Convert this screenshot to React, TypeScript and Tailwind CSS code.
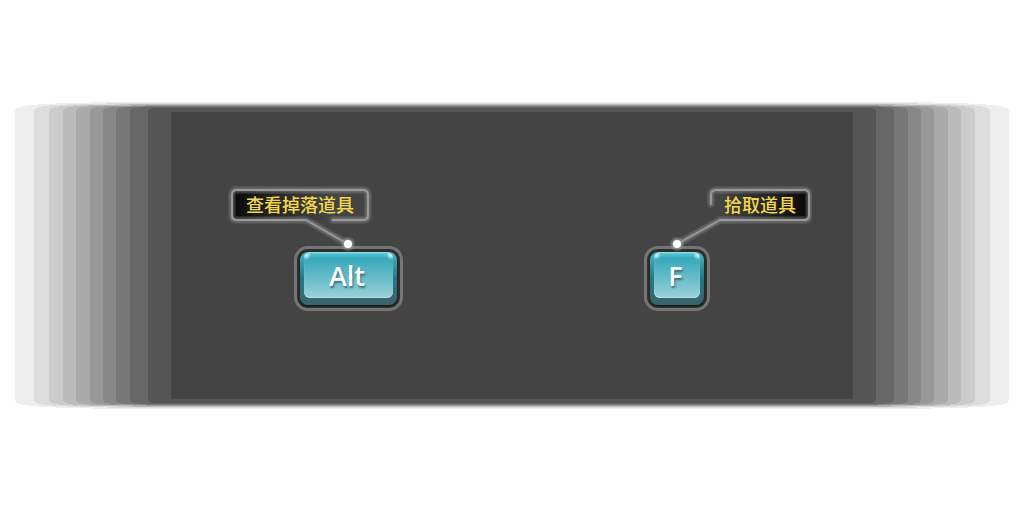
const bands = [
  { x: 15, top: 102, bottom: 409, fill: '#eeeeee' },
  { x: 34, top: 103, bottom: 408, fill: '#dddddd' },
  { x: 49, top: 104, bottom: 407, fill: '#cccccc' },
  { x: 63, top: 104, bottom: 407, fill: '#bbbbbb' },
  { x: 76, top: 105, bottom: 406, fill: '#aaaaaa' },
  { x: 90, top: 105, bottom: 406, fill: '#999999' },
  { x: 103, top: 106, bottom: 405, fill: '#888888' },
  { x: 116, top: 106, bottom: 405, fill: '#777777' },
  { x: 130, top: 107, bottom: 404, fill: '#666666' },
  { x: 148, top: 108, bottom: 403, fill: '#555555' },
];

function bandPath(x: number, top: number, bottom: number) {
  const r = 1024 - x;
  return `M${x} 111C${x} 105 ${x + 20} ${top + 1} ${x + 110} ${top}H${r - 110}C${r - 20} ${top + 1} ${r} 105 ${r} 111V400C${r} 406 ${r - 20} ${bottom - 1} ${r - 110} ${bottom}H${x + 110}C${x + 20} ${bottom - 1} ${x} 406 ${x} 400Z`;
}

function Backdrop() {
  return (
    <svg className="col-start-1 row-start-1 h-full w-full" viewBox="0 0 1024 512" preserveAspectRatio="none" shapeRendering="crispEdges" aria-hidden="true">
      {bands.map((b) => (
        <path key={b.x} d={bandPath(b.x, b.top, b.bottom)} fill={b.fill} />
      ))}
      <rect x="171" y="112" width="682" height="287" fill="#444444" />
    </svg>
  );
}

function Keycap({ label, wide }: { label: string; wide?: boolean }) {
  return (
    <button
      type="button"
      className={`h-[65px] rounded-[14px] border-[3px] border-[#757575] bg-[#303030] p-[3px] ${wide ? 'w-[109px]' : 'w-[66px]'}`}
    >
      <span className="flex h-full flex-col rounded-lg bg-linear-to-b from-[#48b5c4] via-[#237783] to-[#3b626a] px-1 pb-[7px] shadow-[0_1px_2px_#111]">
        <span className="flex flex-1 items-center justify-center rounded-md border-t border-[#8ee0eb] bg-[radial-gradient(circle_at_2px_2px,#e4fbff_0px,transparent_5px),radial-gradient(circle_at_calc(100%-2px)_2px,#e4fbff_0px,transparent_5px),linear-gradient(#62c8d6_0px,#35a9bb_5px,#9bd0d9)] pr-[3px] font-['Open_Sans',sans-serif] text-[27px] leading-7 font-semibold text-white shadow-[inset_0_-1px_1px_#b0e0e6] text-shadow-[1px_2px_2px_#37727b]">
          {label}
        </span>
      </span>
    </button>
  );
}

const labelText =
  "font-['Noto_Sans_CJK_SC',sans-serif] text-[18px] leading-6 font-medium text-[#f5d84a]";

function Callout({ d }: { d: string }) {
  return (
    <g strokeLinecap="round" strokeLinejoin="round">
      <path d={d} stroke="#999" strokeOpacity=".18" strokeWidth="8" />
      <path d={d} stroke="#999" strokeOpacity=".3" strokeWidth="5" />
      <path d={d} stroke="#999" strokeWidth="2" />
    </g>
  );
}

function LootHint() {
  return (
    <section className="grid h-[127px] w-[175px]">
      <svg className="col-start-1 row-start-1" width="175" height="70" viewBox="228 184 175 70" fill="none" aria-hidden="true">
        <defs>
          <linearGradient id="loot-shade">
            <stop offset="0" stopColor="#080808" />
            <stop offset=".3" stopColor="#242424" />
            <stop offset=".7" stopColor="#444" />
          </linearGradient>
        </defs>
        <rect x="232" y="190" width="136" height="30" rx="5" fill="url(#loot-shade)" />
        <Callout d="M333 220H363Q368 220 368 215V195Q368 190 363 190H237Q232 190 232 195V215Q232 220 237 220H306L348 244" />
      </svg>
      <p className={`col-start-1 row-start-1 pt-2 pl-[18px] ${labelText}`}>查看掉落道具</p>
      <div className="col-start-1 row-start-1 flex items-end justify-end">
        <Keycap label="Alt" wide />
      </div>
      <svg className="relative col-start-1 row-start-1" width="175" height="70" viewBox="228 184 175 70" aria-hidden="true">
        <circle cx="348" cy="244" r="7" fill="#999" fillOpacity=".4" />
        <circle cx="348" cy="244" r="5" fill="#999" fillOpacity=".7" />
        <circle cx="348" cy="244" r="4" fill="#fff" />
      </svg>
    </section>
  );
}

function PickupHint() {
  return (
    <section className="grid h-[127px] w-[168px]">
      <svg className="col-start-1 row-start-1" width="168" height="70" viewBox="644 184 168 70" fill="none" aria-hidden="true">
        <defs>
          <linearGradient id="pickup-shade">
            <stop offset=".1" stopColor="#444" />
            <stop offset=".6" stopColor="#242424" />
            <stop offset="1" stopColor="#080808" />
          </linearGradient>
        </defs>
        <rect x="711" y="190" width="98" height="30" rx="5" fill="url(#pickup-shade)" />
        <Callout d="M711 204V195Q711 190 716 190H804Q809 190 809 195V215Q809 220 804 220H720L677 244" />
      </svg>
      <p className={`col-start-1 row-start-1 pt-2 pl-20 ${labelText}`}>拾取道具</p>
      <div className="col-start-1 row-start-1 flex items-end">
        <Keycap label="F" />
      </div>
      <svg className="relative col-start-1 row-start-1" width="168" height="70" viewBox="644 184 168 70" aria-hidden="true">
        <circle cx="677" cy="244" r="7" fill="#999" fillOpacity=".4" />
        <circle cx="677" cy="244" r="5" fill="#999" fillOpacity=".7" />
        <circle cx="677" cy="244" r="4" fill="#fff" />
      </svg>
    </section>
  );
}

export default function App() {
  return (
    <main className="grid min-h-screen bg-white">
      <Backdrop />
      <div className="col-start-1 row-start-1 flex items-center justify-center gap-[241px] pb-[17px] pl-4">
        <LootHint />
        <PickupHint />
      </div>
    </main>
  );
}
